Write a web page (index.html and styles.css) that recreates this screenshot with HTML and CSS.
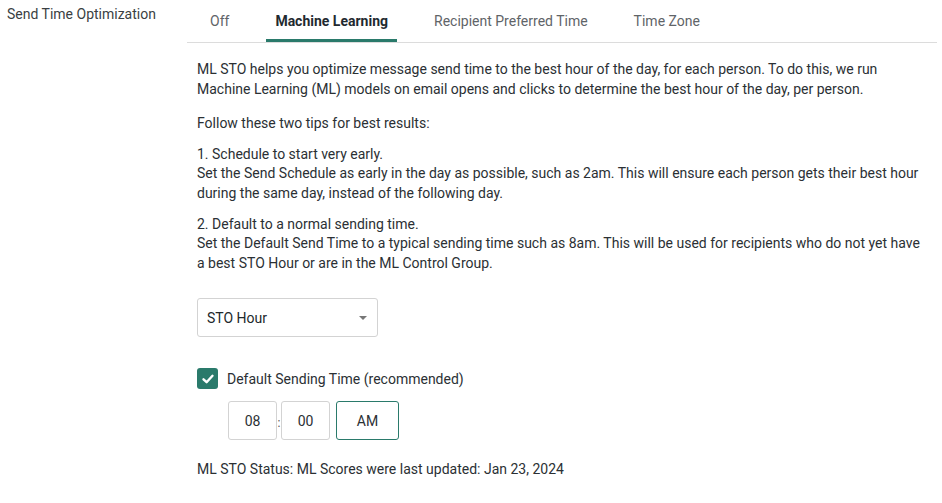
FILE: index.html
```html
<!DOCTYPE html>
<html lang="en">
<head>
<meta charset="utf-8">
<title>Send Time Optimization</title>
<link rel="stylesheet" href="styles.css">
</head>
<body>
<div class="row">
  <div class="label">Send Time Optimization</div>
  <div class="panel">
    <div class="tabs">
      <div class="tab">Off</div>
      <div class="tab active">Machine Learning</div>
      <div class="tab">Recipient Preferred Time</div>
      <div class="tab">Time Zone</div>
    </div>
    <div class="content">
      <p class="intro">ML STO helps you optimize message send time to the best hour of the day, for each person. To do this, we run Machine Learning (ML) models on email opens and clicks to determine the best hour of the day, per person.</p>
      <p class="para">Follow these two tips for best results:</p>
      <p class="para">1. Schedule to start very early.<br>Set the Send Schedule as early in the day as possible, such as 2am. This will ensure each person gets their best hour during the same day, instead of the following day.</p>
      <p class="para last">2. Default to a normal sending time.<br>Set the Default Send Time to a typical sending time such as 8am. This will be used for recipients who do not yet have a best STO Hour or are in the ML Control Group.</p>
      <div class="select">
        <span>STO Hour</span>
        <span class="caret"></span>
      </div>
      <div class="check-row">
        <span class="checkbox">
          <svg width="14" height="14" viewBox="0 0 14 14"><path d="M2.5 7.3 L5.6 10.2 L11.5 3.8" fill="none" stroke="#fff" stroke-width="2.4" stroke-linecap="round" stroke-linejoin="round"/></svg>
        </span>
        <span class="check-label">Default Sending Time (recommended)</span>
      </div>
      <div class="time-row">
        <div class="tbox">08</div>
        <span class="colon">:</span>
        <div class="tbox">00</div>
        <div class="tbox ampm">AM</div>
      </div>
      <p class="status">ML STO Status: ML Scores were last updated: Jan 23, 2024</p>
    </div>
  </div>
</div>
</body>
</html>
```
FILE: styles.css
```css
* { box-sizing: border-box; }
html, body {
  margin: 0;
  padding: 0;
  background: #fff;
}
body {
  font-family: Roboto, "Liberation Sans", Arial, sans-serif;
  font-size: 14px;
  color: #2b3034;
}
.row {
  display: flex;
}
.label {
  width: 187px;
  flex: none;
  padding: 4px 0 0 7px;
  line-height: 20px;
  color: #3a3f43;
}
.panel {
  flex: 1;
  margin-right: 5px;
}
.tabs {
  display: flex;
  gap: 28px;
  padding-left: 14px;
  border-bottom: 1px solid #dcdcdc;
}
.tab {
  padding: 11px 9px 8px;
  line-height: 20px;
  border-bottom: 3px solid transparent;
  color: #5f6468;
}
.tab.active {
  font-weight: 700;
  color: #1f2a30;
  border-bottom-color: #2a7a6b;
}
.content {
  padding: 17px 10px 0 10px;
}
.content p {
  margin: 0;
  line-height: 19.6px;
}
.content .intro {
  margin-bottom: 15px;
}
.content .para {
  margin-bottom: 11px;
}
.content .para.last {
  margin-bottom: 0;
}
.select {
  margin-top: 25px;
  width: 181px;
  height: 39px;
  border: 1px solid #d3d3d3;
  border-radius: 3px;
  display: flex;
  align-items: center;
  justify-content: space-between;
  padding: 0 10px 0 9px;
  color: #22282c;
}
.caret {
  width: 0;
  height: 0;
  border-left: 4px solid transparent;
  border-right: 4px solid transparent;
  border-top: 4px solid #777;
}
.check-row {
  margin-top: 31px;
  display: flex;
  align-items: center;
  gap: 9px;
}
.checkbox {
  width: 21px;
  height: 21px;
  border-radius: 3px;
  background: #2a7a6b;
  display: flex;
  align-items: center;
  justify-content: center;
}
.check-label {
  line-height: 20px;
  color: #2b3034;
}
.time-row {
  margin-top: 12px;
  margin-left: 31px;
  display: flex;
  align-items: center;
}
.tbox {
  width: 49px;
  height: 39px;
  border: 1px solid #d3d3d3;
  border-radius: 3px;
  display: flex;
  align-items: center;
  justify-content: center;
  color: #2b3034;
}
.colon {
  width: 4px;
  text-align: center;
  font-size: 12px;
  color: #555;
  padding-top: 4px;
}
.tbox.ampm {
  margin-left: 6px;
  width: 63px;
  border-color: #2a7a6b;
}
.content .status {
  margin-top: 19px;
  line-height: 20px;
}
```
